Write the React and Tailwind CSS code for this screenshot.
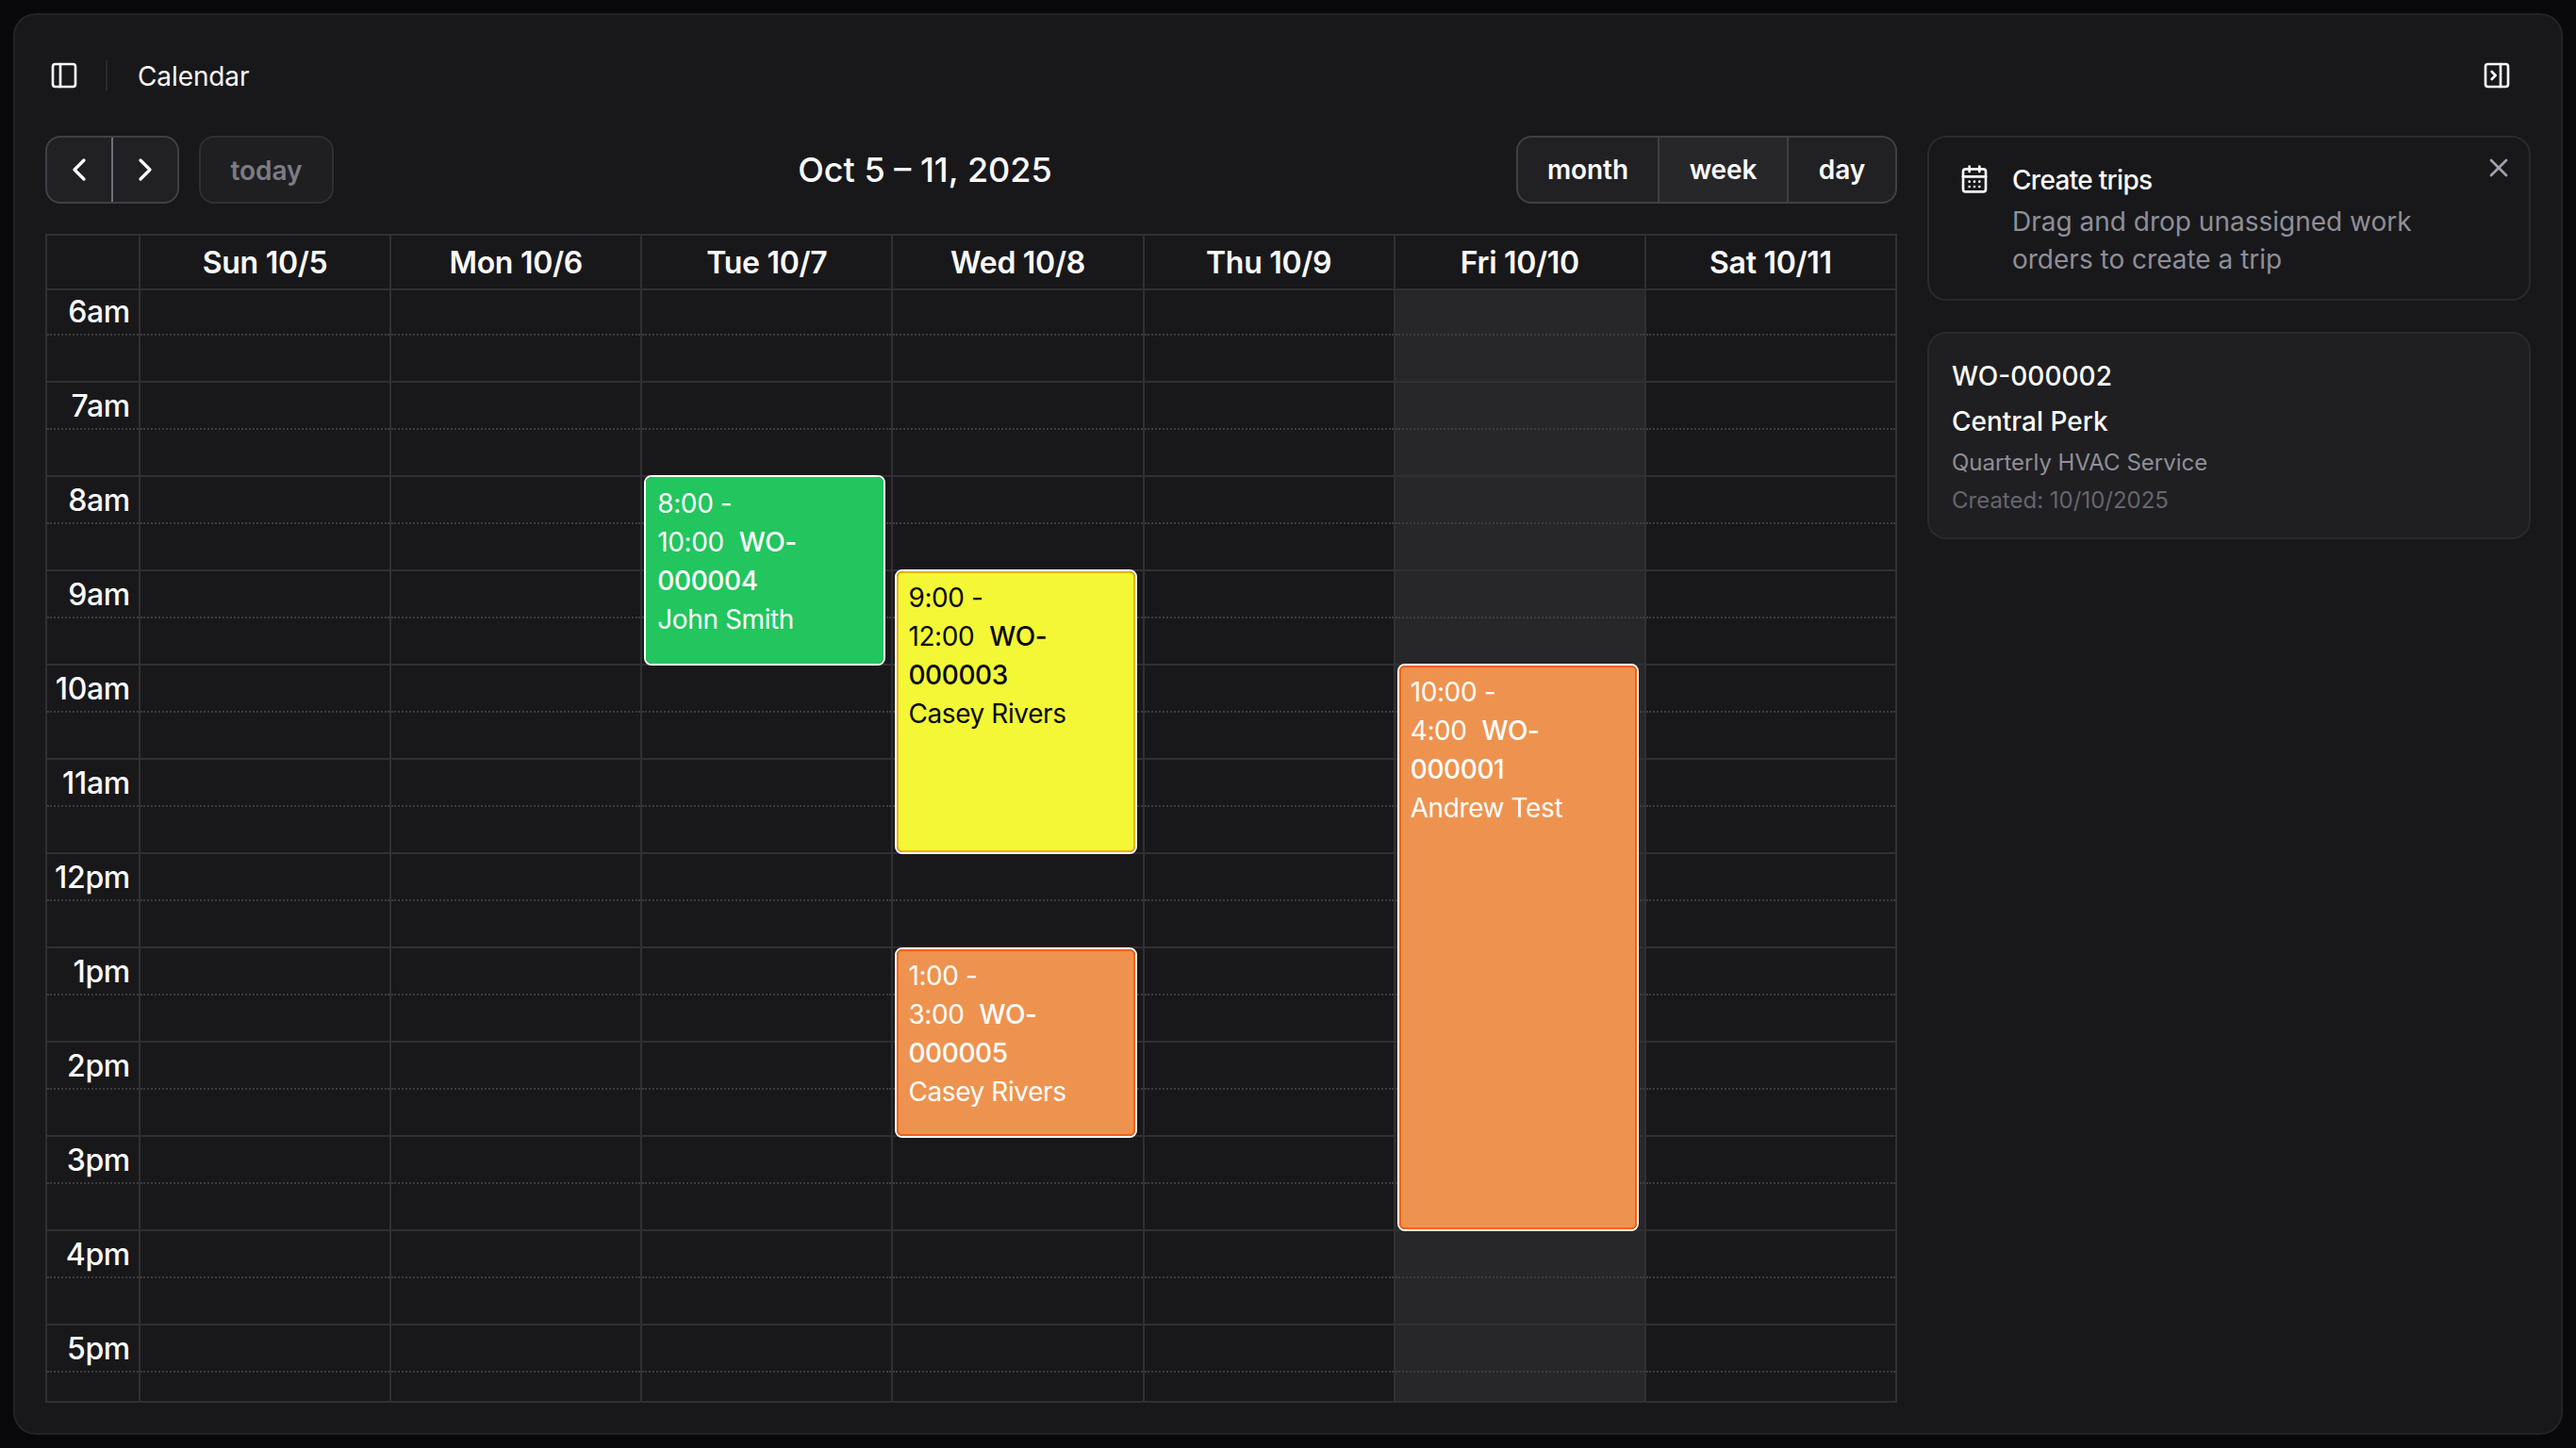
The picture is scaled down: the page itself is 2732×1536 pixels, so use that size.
import { ChevronLeft, ChevronRight, PanelLeft, PanelRightClose, CalendarDays, X } from 'lucide-react';

const hours = ['6am', '7am', '8am', '9am', '10am', '11am', '12pm', '1pm', '2pm', '3pm', '4pm', '5pm'];

const days = [
  { label: 'Sun 10/5' },
  { label: 'Mon 10/6' },
  { label: 'Tue 10/7', events: [{ lines: ['8:00 -', '10:00', '000004', 'John Smith'], pos: 'top-[196px] h-[202px]', color: 'bg-[#22c55e] border-[#22c55e] text-white' }] },
  {
    label: 'Wed 10/8',
    events: [
      { lines: ['9:00 -', '12:00', '000003', 'Casey Rivers'], pos: 'top-[296px] h-[302px]', color: 'bg-[#f3f736] border-[#eab308] text-[#09090b]' },
      { lines: ['1:00 -', '3:00', '000005', 'Casey Rivers'], pos: 'top-[697px] h-[202px]', color: 'bg-[#ee934f] border-[#f9620f] text-white' },
    ],
  },
  { label: 'Thu 10/9' },
  { label: 'Fri 10/10', today: true, events: [{ lines: ['10:00 -', '4:00', '000001', 'Andrew Test'], pos: 'top-[396px] h-[602px]', color: 'bg-[#ee934f] border-[#f9620f] text-white' }] },
  { label: 'Sat 10/11' },
];

// one hour = a solid-topped slot and a dotted-topped slot
const Slots = ({ labels }) => (
  <>
    {hours.map((hour, i) => (
      <div key={hour}>
        <div className={`${i === 0 ? 'h-[46px] leading-[46px]' : 'h-[50px] border-t-2 border-[#303033] leading-[50px]'} flex justify-end pr-[9px] text-[32px] font-medium tracking-[-0.3px]`}>
          {labels ? hour : null}
        </div>
        <div className={`${i === hours.length - 1 ? 'h-[32px]' : 'h-[50px]'} border-t-2 border-dotted border-[#3c3c41]`} />
      </div>
    ))}
  </>
);

const Event = ({ event }) => (
  <div className={`absolute left-[2px] right-[6px] z-10 rounded-lg border-2 border-white ${event.pos}`}>
    <div className={`h-full rounded-md border-2 px-[10px] pt-[6px] text-[28px] leading-[41px] tracking-[-0.4px] ${event.color}`}>
      <div>{event.lines[0]}</div>
      <div>
        {event.lines[1]}
        <span className="ml-[16px] font-medium">WO-</span>
      </div>
      <div className="font-medium">{event.lines[2]}</div>
      <div>{event.lines[3]}</div>
    </div>
  </div>
);

const App = () => {
  return (
    <div className="h-screen w-full bg-[#09090b] p-[14px] font-['Inter',sans-serif] text-[#fafafa]">
      <div className="flex h-full flex-col rounded-[24px] border-2 border-[#232326] bg-[#18181b]">
        {/* Top bar */}
        <header className="flex h-[128px] shrink-0 items-center justify-between pl-[36px] pr-[52px]">
          <div className="flex items-center">
            <PanelLeft className="h-8 w-8" strokeWidth={2} />
            <div className="ml-[28px] mr-[32px] h-8 w-[2px] bg-[#2a2a2d]" />
            <span className="pt-[2px] text-[28px] leading-10 tracking-[-0.1px]">Calendar</span>
          </div>
          <PanelRightClose className="h-8 w-8" strokeWidth={2} />
        </header>

        <div className="flex min-h-0 flex-1 gap-8 px-8 pb-8">
          {/* Calendar */}
          <main className="flex w-[1964px] flex-col gap-8">
            <div className="flex h-[72px] items-center justify-between">
              <div className="flex items-center gap-[21px]">
                <div className="flex h-[72px] w-[142px] rounded-2xl border-2 border-[#3f3f46] bg-[#212124]">
                  <button className="flex flex-1 items-center justify-center border-r-2 border-[#71717a]">
                    <ChevronLeft className="h-10 w-10" strokeWidth={2} />
                  </button>
                  <button className="flex flex-1 items-center justify-center">
                    <ChevronRight className="h-10 w-10" strokeWidth={2} />
                  </button>
                </div>
                <button className="h-[72px] w-[143px] rounded-2xl border-2 border-[#2f2f33] bg-[#1f1f22] pt-[2px] text-[28px] font-semibold text-[#7c7c84]">
                  today
                </button>
              </div>
              <h1 className="text-[36px] font-medium leading-[48px]">Oct 5 – 11, 2025</h1>
              <div className="flex h-[72px] w-[404px] overflow-hidden rounded-2xl border-2 border-[#3f3f46] bg-[#212124] text-[28px] font-semibold tracking-[-0.1px]">
                <button className="w-[150px] border-r-2 border-[#3f3f46]">month</button>
                <button className="w-[137px] border-r-2 border-[#3f3f46] bg-[#27272a]">week</button>
                <button className="flex-1">day</button>
              </div>
            </div>

            <div className="flex-1 border-2 border-[#303033]">
              <div className="grid h-[58px] grid-cols-[97px_repeat(7,1fr)] border-b-2 border-[#303033]">
                <div />
                {days.map((day) => (
                  <div key={day.label} className="flex items-center justify-center border-l-2 border-[#303033] pt-[2px] text-[32px] font-semibold tracking-[-0.3px]">
                    {day.label}
                  </div>
                ))}
              </div>
              <div className="grid grid-cols-[97px_repeat(7,1fr)]">
                <div>
                  <Slots labels />
                </div>
                {days.map((day) => (
                  <div key={day.label} className={`relative border-l-2 border-[#303033] ${day.today ? 'bg-[#27272a]' : ''}`}>
                    <Slots />
                    {day.events?.map((event) => (
                      <Event key={event.lines[2]} event={event} />
                    ))}
                  </div>
                ))}
              </div>
            </div>
          </main>

          {/* Unassigned work orders */}
          <aside className="flex w-[640px] flex-col gap-[33px]">
            <div className="relative h-[175px] rounded-[20px] border-2 border-[#2a2a2d] pl-8 pt-[25px]">
              <X className="absolute right-[16px] top-[16px] h-8 w-8 text-[#a1a1aa]" strokeWidth={2} />
              <div className="flex gap-6">
                <CalendarDays className="mt-[3px] h-8 w-8 shrink-0" strokeWidth={2} />
                <div>
                  <div className="text-[28px] font-medium leading-10 tracking-[-0.7px]">Create trips</div>
                  <div className="mt-1 w-[480px] text-[28px] leading-10 text-[#8f8f98]">
                    Drag and drop unassigned work orders to create a trip
                  </div>
                </div>
              </div>
            </div>
            <div className="h-[220px] rounded-[20px] border-2 border-[#2a2a2d] bg-[#1f1f22] px-6 pt-[25px]">
              <div className="text-[28px] font-medium leading-10">WO-000002</div>
              <div className="mt-2 text-[28px] font-medium leading-10">Central Perk</div>
              <div className="mt-2 text-2xl leading-8 text-[#8f8f98]">Quarterly HVAC Service</div>
              <div className="mt-2 text-2xl leading-8 text-[#66666e]">Created: 10/10/2025</div>
            </div>
          </aside>
        </div>
      </div>
    </div>
  );
};

export default App;
